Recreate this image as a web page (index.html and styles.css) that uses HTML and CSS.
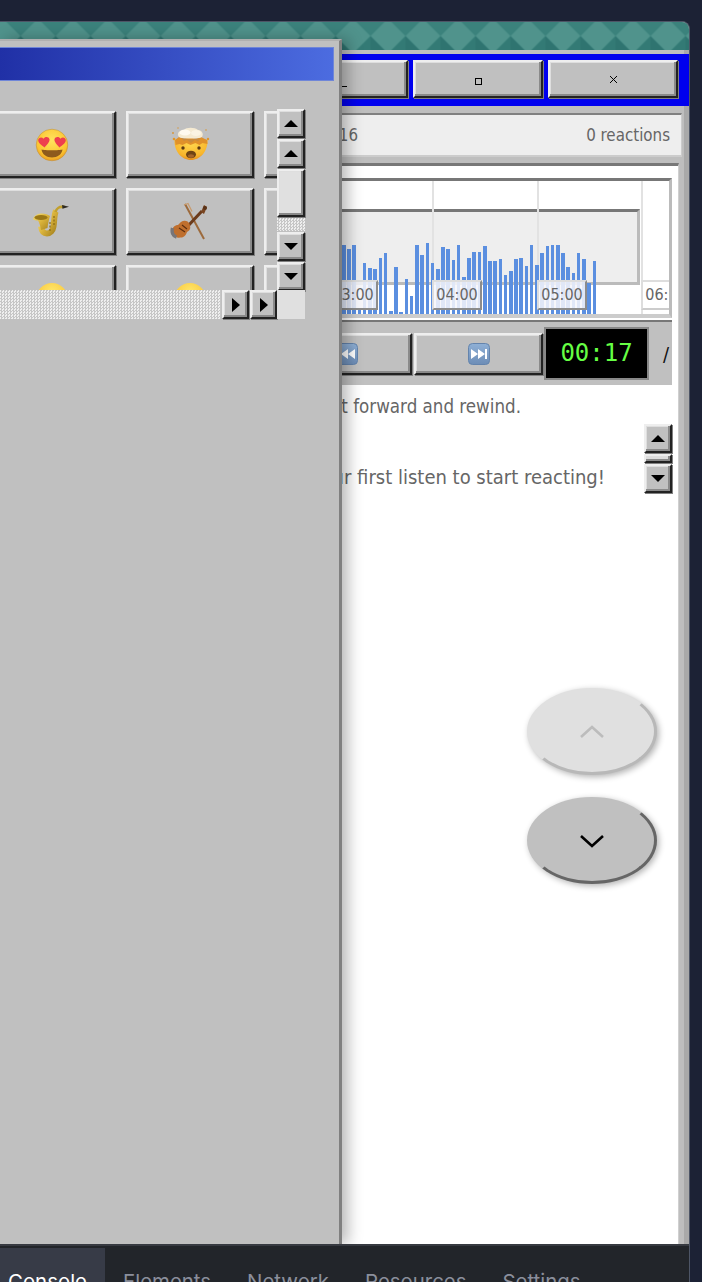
FILE: index.html
```html
<!DOCTYPE html>
<html lang="en">
<head>
<meta charset="utf-8">
<title>Listening room</title>
<link rel="stylesheet" href="styles.css">
</head>
<body>
<div class="app">
  <div class="wallpaper">
    <svg class="wallpaper-art" width="100%" height="100%" aria-hidden="true">
      <defs>
        <pattern id="argyle" x="20.5" y="-3.5" width="35" height="35" patternUnits="userSpaceOnUse">
          <rect width="35" height="35" fill="#3f8d86"/>
          <polygon points="17.5,0 35,17.5 17.5,35 0,17.5" fill="#50938c"/>
          <polygon points="0,0 17.5,0 0,17.5" fill="#3b827c"/>
          <polygon points="35,0 17.5,0 35,17.5" fill="#3b827c"/>
          <polygon points="0,35 17.5,35 0,17.5" fill="#2f7470"/>
          <polygon points="35,35 17.5,35 35,17.5" fill="#337a75"/>
        </pattern>
      </defs>
      <rect width="100%" height="100%" fill="url(#argyle)"/>
    </svg>
  </div>

  <div class="desk">
    <main class="window">
      <header class="titlebar">
        <button class="raised title-btn"><span class="glyph-min"></span></button>
        <button class="raised title-btn"><span class="glyph-max"></span></button>
        <button class="raised title-btn">
          <svg class="glyph-close" width="9" height="9" viewBox="0 0 9 9"><path d="M1 1l7 7M8 1l-7 7" stroke="#000" stroke-width="1" fill="none"/></svg>
        </button>
      </header>

      <div class="infobar">
        <span class="info-left">Posted Jun 16</span>
        <span>0 reactions</span>
      </div>

      <section class="content">
        <div class="chart">
          <div class="selection"></div>
          <i class="gridline gl-4"></i><i class="gridline gl-5"></i><i class="gridline gl-6"></i>
          <div class="bars">
            <b style="height:69px"></b><b style="height:65px"></b><b style="height:69px"></b><b style="height:4px"></b><b style="height:51px"></b><b style="height:46px"></b><b style="height:45px"></b><b style="height:56px"></b><b style="height:61px"></b><b style="height:3px"></b><b style="height:47px"></b><b style="height:2px"></b><b style="height:35px"></b><b style="height:18px"></b><b style="height:69px"></b><b style="height:59px"></b><b style="height:71px"></b><b style="height:51px"></b><b style="height:45px"></b><b style="height:67px"></b><b style="height:65px"></b><b style="height:54px"></b><b style="height:69px"></b><b style="height:37px"></b><b style="height:56px"></b><b style="height:62px"></b><b style="height:62px"></b><b style="height:68px"></b><b style="height:53px"></b><b style="height:53px"></b><b style="height:55px"></b><b style="height:39px"></b><b style="height:43px"></b><b style="height:55px"></b><b style="height:56px"></b><b style="height:48px"></b><b style="height:69px"></b><b style="height:49px"></b><b style="height:61px"></b><b style="height:68px"></b><b style="height:69px"></b><b style="height:69px"></b><b style="height:61px"></b><b style="height:47px"></b><b style="height:41px"></b><b style="height:61px"></b><b style="height:55px"></b><b style="height:31px"></b><b style="height:53px"></b>
          </div>
          <span class="tick t3">03:00</span>
          <span class="tick t4">04:00</span>
          <span class="tick t5">05:00</span>
          <span class="tick t6">06:00</span>
        </div>

        <div class="controls">
          <button class="raised ctl-btn">
            <svg class="media" width="22" height="22" viewBox="0 0 22 22"><defs><linearGradient id="key" x1="0" y1="0" x2="0" y2="1"><stop offset="0" stop-color="#8fb0d6"/><stop offset="1" stop-color="#6d8db6"/></linearGradient></defs><rect x=".5" y=".5" width="21" height="21" rx="4" fill="url(#key)" stroke="#6484ad"/><path d="M3 6h2v10H3zM12 6v10l-7-5zM19 6v10l-7-5z" fill="#fff"/></svg>
          </button>
          <button class="raised ctl-btn next">
            <svg class="media" width="22" height="22" viewBox="0 0 22 22"><rect x=".5" y=".5" width="21" height="21" rx="4" fill="url(#key)" stroke="#6484ad"/><path d="M3 6v10l7-5zM10 6v10l7-5zM17 6h2v10h-2z" fill="#fff"/></svg>
          </button>
          <div class="timer">00:17</div>
          <span class="slash">/</span>
        </div>

        <div class="messages">
          <div class="message-text">
            <p class="note">Press and hold to fast forward and rewind.</p>
            <p class="lead">Wait until after your first listen to start reacting!</p>
          </div>
          <div class="vscroll mini">
            <button class="raised sbtn"><i class="tri up"></i></button>
            <div class="raised mini-thumb"></div>
            <button class="raised sbtn"><i class="tri down"></i></button>
          </div>
        </div>

        <button class="fab fab-up" aria-label="Up">
          <svg width="26" height="16" viewBox="0 0 26 16"><path d="M2 13L13 3l11 10" fill="none" stroke="#bcbcbc" stroke-width="2.6"/></svg>
        </button>
        <button class="fab fab-down" aria-label="Down">
          <svg width="26" height="16" viewBox="0 0 26 16"><path d="M2 3l11 10L24 3" fill="none" stroke="#000" stroke-width="2.6"/></svg>
        </button>
      </section>
    </main>

    <aside class="picker">
      <div class="picker-title"></div>
      <div class="picker-body">
        <div class="view">
          <div class="emoji-grid">
            <button class="raised emoji-btn">
              <svg width="40" height="40" viewBox="0 0 40 40">
                <defs>
                  <radialGradient id="face" cx="50%" cy="35%" r="70%"><stop offset="0" stop-color="#ffe25e"/><stop offset=".7" stop-color="#fbc531"/><stop offset="1" stop-color="#e8921e"/></radialGradient>
                </defs>
                <circle cx="20" cy="20" r="15.8" fill="url(#face)" stroke="#b98a3c" stroke-width=".5"/>
                <path d="M12.500 22.500c-3-2.500-6.500-4.500-6.300-7.500.2-2.500 3.500-3.400 5.300-1.300 1.400-2.600 5.400-2.300 6 .6.500 2.700-2.800 5.600-5 8.200z" fill="#ee3f4e"/>
                <path d="M27.500 22.500c3-2.500 6.500-4.500 6.300-7.500-.2-2.500-3.500-3.400-5.300-1.300-1.400-2.600-5.400-2.300-6 .6-.5 2.700 2.800 5.600 5 8.200z" fill="#ee3f4e"/>
                <path d="M9.500 24.500c3 1.100 18 1.100 21 0-.6 4.800-5 8-10.500 8s-9.900-3.200-10.500-8z" fill="#8d5a1d"/>
              </svg>
            </button>
            <button class="raised emoji-btn">
              <svg width="40" height="40" viewBox="0 0 40 40">
                <defs>
                  <radialGradient id="face2" cx="50%" cy="25%" r="80%"><stop offset="0" stop-color="#ffd64c"/><stop offset=".7" stop-color="#f8b52c"/><stop offset="1" stop-color="#e2841c"/></radialGradient>
                </defs>
                <path d="M4.500 15c0-1 33-1 33 0 .5 11-7 20-16.500 20S4 26 4.500 15z" fill="url(#face2)"/>
                <path d="M5 15l4-3 5 2 6-2 6 2 5-2 6 3 .5 4-5-1-3 2-4-2-5 2-4-2-4 2-3-1-4 1z" fill="#e0912a"/>
                <path d="M9 12C6 8 10 5 14 5c2-3 11-3 14 0 4 0 6 4 4 7-3 2-20 2-23 0z" fill="#f5ead2"/>
                <ellipse cx="15" cy="7.500" rx="5.500" ry="3" fill="#fffaf0"/>
                <ellipse cx="26" cy="8" rx="5" ry="3" fill="#fbf3e2"/>
                <path d="M11 13c5 1.500 14 1.500 20 0l-3 3.500-3-1.500-4 3-4-3-3 1z" fill="#c98b3e"/>
                <circle cx="4" cy="14" r="1.300" fill="#e0962a"/><circle cx="3" cy="8" r=".9" fill="#d99433"/><circle cx="36" cy="5" r=".8" fill="#d99433"/><circle cx="38" cy="14" r="1.200" fill="#e0962a"/><circle cx="8" cy="3" r=".7" fill="#d99433"/>
                <circle cx="13" cy="23" r="1.700" fill="#5c3a12"/><circle cx="29" cy="23" r="1.700" fill="#5c3a12"/>
                <ellipse cx="21" cy="29.500" rx="5" ry="3.800" fill="#6f4414"/>
                <ellipse cx="21" cy="31" rx="3" ry="1.800" fill="#a5652a"/>
              </svg>
            </button>
            <button class="raised emoji-btn"></button>

            <button class="raised emoji-btn">
              <svg width="40" height="40" viewBox="0 0 40 40">
                <defs>
                  <linearGradient id="brass" x1="0" y1="0" x2="1" y2="1"><stop offset="0" stop-color="#f6e27a"/><stop offset=".5" stop-color="#d9b23a"/><stop offset="1" stop-color="#a5821f"/></linearGradient>
                </defs>
                <path d="M24 9c-2 3-1.500 10-2.500 15.500-.7 4.500-3.500 7-6.500 7-3.500 0-5.500-3-6-7" fill="none" stroke="url(#brass)" stroke-width="6"/>
                <path d="M1 17c1-3.500 5-5.500 9-5.500 3 0 6 1 8 2.500-1 3-2 8-2.500 12l-6.500 2c-.5-3.500-1.500-7-3-9.500-2 0-4-.5-5-1.500z" fill="url(#brass)"/>
                <ellipse cx="9" cy="15.500" rx="6.500" ry="2.400" fill="#9a7716"/>
                <path d="M23.500 10c1-3.500 4-5.500 7-5l2-.5" fill="none" stroke="#c2a02e" stroke-width="2.600"/>
                <path d="M30 3l7 1.800-6.500 2z" fill="#2d2a24"/>
                <path d="M18 20v9M22 14v9" stroke="#8a6a14" stroke-width="1.200" stroke-dasharray="2 1.500"/>
              </svg>
            </button>
            <button class="raised emoji-btn">
              <svg width="40" height="40" viewBox="0 0 40 40">
                <path d="M15 2l19 35" stroke="#9c6a3c" stroke-width="2" fill="none"/>
                <path d="M14 3l4-1.500 4 8" stroke="#c79a6d" stroke-width="1.300" fill="none"/>
                <path d="M17 25L32 9" stroke="#6b3b1c" stroke-width="3"/>
                <path d="M31 10l3-7 3 2-3 7z" fill="#7a4520"/>
                <circle cx="35" cy="6" r="2" fill="#5a3318"/>
                <path d="M3 28c-1-3.500 3-5 5-5 2-2 4-5.500 8-4 3 .5 4 3.500 4 5 1 3-1 5-3 6-1 3-3 6-7 5.500-3 1-5-1-5-3-2 0-3-2.500-2-4.500z" fill="#bf6f2e"/>
                <path d="M2.500 26c-1 4 0 8 4 9" stroke="#77767a" stroke-width="3.400" fill="none"/>
                <path d="M9 26l6 4M12 23l5 4" stroke="#5c2e10" stroke-width="1.200"/>
              </svg>
            </button>
            <button class="raised emoji-btn"></button>

            <button class="raised emoji-btn">
              <svg width="40" height="40" viewBox="0 0 40 40"><defs><radialGradient id="face3" cx="50%" cy="30%" r="70%"><stop offset="0" stop-color="#ffe96e"/><stop offset="1" stop-color="#f8bd2f"/></radialGradient></defs><circle cx="20" cy="20" r="16" fill="url(#face3)"/></svg>
            </button>
            <button class="raised emoji-btn">
              <svg width="40" height="40" viewBox="0 0 40 40"><circle cx="20" cy="20" r="16" fill="url(#face3)"/></svg>
            </button>
            <button class="raised emoji-btn"></button>
          </div>
        </div>

        <div class="vscroll">
          <button class="raised sbtn"><i class="tri up"></i></button>
          <button class="raised sbtn"><i class="tri up"></i></button>
          <div class="raised thumb"></div>
          <div class="track"></div>
          <button class="raised sbtn"><i class="tri down"></i></button>
          <button class="raised sbtn"><i class="tri down"></i></button>
        </div>

        <div class="hscroll">
          <div class="track"></div>
          <button class="raised sbtn"><i class="tri right"></i></button>
          <button class="raised sbtn"><i class="tri right"></i></button>
        </div>
        <div class="corner"></div>
      </div>
    </aside>
  </div>

  <nav class="devtools">
    <a class="tab active">Console</a>
    <a class="tab">Elements</a>
    <a class="tab">Network</a>
    <a class="tab">Resources</a>
    <a class="tab">Settings</a>
  </nav>
</div>
</body>
</html>
```

FILE: styles.css
```css
* { box-sizing: border-box; }
html, body { margin: 0; height: 100%; }
body {
  background: #1c2235;
  overflow: hidden;
  font-family: "DejaVu Sans Condensed", "DejaVu Sans", sans-serif;
  color: #666;
}
p { margin: 0; }
button { font: inherit; padding: 0; cursor: pointer; }

.app {
  margin: 21px 12px 0 0;
  height: 1261px;
  display: flex;
  flex-direction: column;
  border-top: 1px solid #4d5566;
  border-right: 1px solid #4d5566;
  border-top-right-radius: 8px;
  overflow: hidden;
  background: #bdbdbd;
}
.wallpaper { height: 28px; flex: none; }
.wallpaper-art { display: block; }

.desk { flex: 1; position: relative; min-height: 0; }

.raised {
  background: #c0c0c0;
  border: 2px solid;
  border-color: #eeeeee #222 #222 #eeeeee;
  box-shadow: inset -2px -2px 0 #8a8a8a, inset 1px 1px 0 #dedede, 1px 1px 0 #808080;
}

/* main window */
.window {
  height: 100%;
  padding-top: 4px;
  display: flex;
  flex-direction: column;
  background: #bebebe;
  border-right: 5px solid #a9a9a9;
}
.titlebar {
  height: 52px;
  flex: none;
  background: #0000ee;
  margin-right: -5px;
  padding: 6px 11px 8px 0;
  display: flex;
  justify-content: flex-end;
  gap: 5px;
}
.title-btn {
  width: 130px;
  display: flex;
  align-items: center;
  justify-content: center;
}
.glyph-min { width: 8px; height: 1px; background: #000; margin-top: 15px; }
.glyph-max { width: 7px; height: 7px; border: 1px solid #000; margin-top: 5px; }
.glyph-close { display: block; }

.infobar {
  height: 44px;
  flex: none;
  margin: 7px 2px 0 0;
  padding-right: 11px;
  background: #eee;
  border-top: 2px solid #808080;
  border-bottom: 2px solid #ccc;
  border-right: 1px solid #ccc;
  display: flex;
  align-items: center;
  justify-content: space-between;
  font-size: 16.8px;
}
.info-left { width: 358px; text-align: right; white-space: nowrap; }

.content {
  position: relative;
  flex: 1;
  min-height: 0;
  margin: 6px 5px 0 0;
  padding-top: 12px;
  background: #fff;
  border-top: 3px solid #777;
  display: flex;
  flex-direction: column;
  border-right: 1px solid #d0d0d0;
}

.chart {
  position: relative;
  height: 140px;
  flex: none;
  margin-right: 6px;
  overflow: hidden;
  background: #fff;
  border-top: 3px solid #777;
  border-right: 3px solid #bbb;
  border-bottom: 4px solid #ccc;
}
.selection {
  position: absolute;
  left: 0;
  top: 28px;
  width: 640px;
  height: 76px;
  background: #eee;
  border-top: 3px solid #777;
  border-right: 3px solid #bbb;
  border-bottom: 3px solid #bbb;
}
.gridline {
  position: absolute;
  top: 0;
  bottom: 0;
  width: 2px;
  background: #e2e2e2;
}
.gl-4 { left: 432px; }
.gl-5 { left: 537px; }
.gl-6 { left: 641px; }
.bars {
  position: absolute;
  left: 342px;
  bottom: 0;
  display: flex;
  align-items: flex-end;
  gap: 1.64px;
}
.bars b { display: block; width: 3.6px; flex: none; background: #5b8fe0; }
.tick {
  position: absolute;
  top: 99px;
  width: 50px;
  height: 30px;
  background: rgba(246, 246, 250, .86);
  border: 2px solid;
  border-color: #ddd #8c8c8c #8c8c8c #ddd;
  font-size: 16px;
  line-height: 26px;
  text-align: center;
  white-space: nowrap;
}
.t3 { left: 328px; }
.t4 { left: 432px; }
.t5 { left: 537px; }
.t6 { left: 641px; background: #fff; border-color: #ddd #ccc #ccc #ddd; }

.controls {
  height: 65px;
  flex: none;
  margin: 2px 6px 0 0;
  padding-left: 282px;
  background: #c0c0c0;
  border-top: 2px solid #777;
  display: flex;
  align-items: center;
  gap: 2px;
}
.ctl-btn {
  width: 130px;
  height: 42px;
  display: flex;
  align-items: center;
  justify-content: center;
}
.next { width: 129px; }
.timer {
  width: 105px;
  height: 53px;
  margin-left: -1px;
  background: #000;
  border: 2px solid #888;
  color: #66ff44;
  font: 24px/49px "DejaVu Sans Mono", monospace;
  text-align: center;
}
.slash { margin-left: 12px; color: #111; font-size: 20px; }

.messages {
  display: flex;
  justify-content: space-between;
  padding-right: 6px;
}
.message-text { flex: none; }
.note {
  width: 521px;
  height: 22px;
  margin-top: 11px;
  text-align: right;
  white-space: nowrap;
  font-size: 18.6px;
  line-height: 22px;
}
.lead {
  width: 605px;
  margin-top: 46px;
  text-align: right;
  white-space: nowrap;
  font-size: 20px;
  line-height: 26px;
}
.vscroll { display: flex; flex-direction: column; }
.mini { width: 28px; height: 70px; margin-top: 39px; gap: 1px; }
.mini .sbtn { height: 29px; }
.mini-thumb { height: 9px; background: #ddd; flex: none; }

.sbtn {
  display: flex;
  align-items: center;
  justify-content: center;
  flex: none;
  width: 100%;
}
.tri { display: block; width: 0; height: 0; border: solid transparent; }
.tri.up { border-width: 0 7px 7px; border-bottom-color: #000; }
.tri.down { border-width: 7px 7px 0; border-top-color: #000; }
.tri.right { border-width: 7px 0 7px 8px; border-left-color: #000; }

.fab {
  position: absolute;
  right: 21px;
  width: 130px;
  height: 87px;
  border-radius: 50%;
  border: 3px solid transparent;
  display: flex;
  align-items: center;
  justify-content: center;
  box-shadow: 2px 2px 6px rgba(0, 0, 0, .3);
}
.fab-up {
  top: 522px;
  background: #e0e0e0;
  border-right-color: #b8b8b8;
  border-bottom-color: #b8b8b8;
}
.fab-down {
  top: 631px;
  background: #c0c0c0;
  border-right-color: #666;
  border-bottom-color: #666;
}

/* reaction picker */
.picker {
  position: absolute;
  left: 0;
  top: -11px;
  bottom: 0;
  width: 342px;
  padding: 6px 5px 0 0;
  background: #c0c0c0;
  border-top: 2px solid #b0b0b0;
  border-right: 3px solid #808080;
  box-shadow: 6px 0 14px rgba(0, 0, 0, .28);
}
.picker-title {
  height: 34px;
  background: linear-gradient(90deg, #2030a6, #4c6ce0);
  border: 1px solid #6f86d8;
  border-left: 0;
}
.picker-body {
  margin-top: 28px;
  display: grid;
  grid-template-columns: 277px 28px;
  grid-template-rows: 181px 29px;
}
.view { overflow: hidden; }
.emoji-grid {
  display: grid;
  grid-template-columns: repeat(3, 128px);
  grid-auto-rows: 67px;
  gap: 10px;
  margin: 2px 0 0 -12px;
}
.emoji-btn {
  display: flex;
  align-items: center;
  justify-content: center;
}
.emoji-btn svg { display: block; flex: none; }
.picker-body > .vscroll { gap: 1px; }
.picker-body > .vscroll .sbtn { height: 29px; }
.thumb { height: 48px; flex: none; background: #e0e0e0; }
.track {
  background: repeating-conic-gradient(#c6c6c6 0 25%, #efefef 0 50%) 0 0 / 3px 3px;
}
.vscroll .track { height: 13px; flex: none; }
.hscroll { display: flex; gap: 1px; }
.hscroll .track { flex: 1; }
.hscroll .sbtn { width: 27px; }
.corner { background: #e0e0e0; }

/* devtools */
.devtools {
  height: 38px;
  flex: none;
  position: relative;
  z-index: 2;
  padding-top: 2px;
  background: #22252a;
  border-top: 2px solid #373a41;
  display: flex;
  font: 20.4px/1 Inter, Roboto, sans-serif;
  color: #8b8f9c;
  overflow: hidden;
}
.tab { display: block; padding: 24px 18px 0; white-space: nowrap; }
.tab.active { padding-left: 8px; background: #373b47; color: #fff; }
```
